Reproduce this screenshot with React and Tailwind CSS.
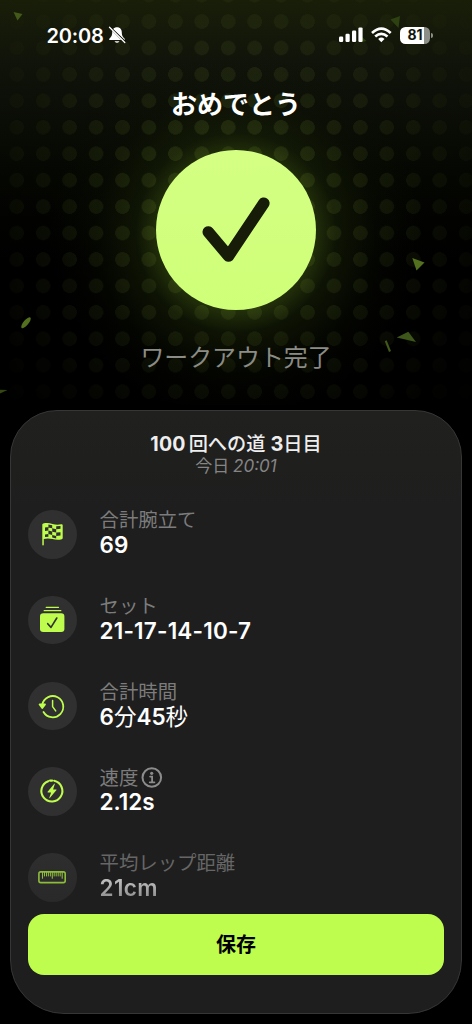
import React from 'react';

const stats = [
  { icon: FlagIcon, label: '合計腕立て', value: [['69']] },
  { icon: StackIcon, label: 'セット', value: [['21-17-14-10-7', 'tracking-[0.200px]']] },
  { icon: HistoryIcon, label: '合計時間', value: [['6'], ['分', 'font-normal'], ['45'], ['秒', 'font-normal']] },
  { icon: BoltIcon, label: '速度', value: [['2.12s']], info: true },
  { icon: RulerIcon, label: '平均レップ距離', value: [['21cm', 'tracking-[0.4px]']], faded: true }
];

function FlagIcon() {
  return (
    <svg width="48" height="48" viewBox="0 0 48 48" fill="none">
      <path d="M14.300 14.600Q14.300 13.800 15.200 13.500C18.200 12.700 21.500 13 24.500 13.900C27.500 14.800 30.500 14.900 33.300 14.200Q34.700 13.900 34.700 15.200V28Q34.700 28.900 33.800 29.200C30.600 30.200 27.500 29.900 24.500 29.100C21.500 28.300 18.700 28.200 15.800 29V34.700Q15.800 35.400 15 35.400T14.300 34.700Z" fill="#befd4d" />
      <g fill="#303030">
        <path d="M17 17.600L20.400 17V20.400L17 20.900ZM20.400 14.600L24.200 15.300V18.200L20.400 17.400ZM24.200 18.300L28.200 19.200V22.600L24.200 21.800ZM28.200 16.200L32.500 15.900V18.800L28.200 19.200Z" />
        <path d="M20.400 20.400L24.200 21.600V25L20.400 24.100ZM17 24.500L20.400 24V26.700L17 27.100ZM24.200 25L28.200 26V28.400L24.200 27.600ZM28.200 22.600L32.500 22.200V25.600L28.200 26Z" />
      </g>
    </svg>
  );
}

function StackIcon() {
  return (
    <svg width="48" height="48" viewBox="0 0 48 48" fill="none" strokeLinecap="round" strokeLinejoin="round">
      <path d="M18.200 11.300H30.500M16.200 14.700H32.800" stroke="#befd4d" strokeWidth="1.300" />
      <rect x="12" y="17.200" width="24.400" height="18.800" rx="3.200" fill="#befd4d" />
      <path d="M19.700 27.700L23 31.400L28.800 22" stroke="#303030" strokeWidth="1.600" />
    </svg>
  );
}

function HistoryIcon() {
  return (
    <svg width="48" height="48" viewBox="0 0 48 48" fill="none" stroke="#befd4d" strokeWidth="1.800" strokeLinecap="round" strokeLinejoin="round">
      <path d="M14.300 22.500A10.600 10.600 0 1 1 15.500 30" />
      <path d="M11.600 22.500H17L14.300 26Z" fill="#befd4d" />
      <path d="M24.600 18.500V24.600L27.700 28.900" strokeWidth="1.500" />
    </svg>
  );
}

function BoltIcon() {
  return (
    <svg width="48" height="48" viewBox="0 0 48 48" fill="none" stroke="#befd4d" strokeWidth="2.100" strokeLinecap="round">
      <path d="M26.200 13.800A10.500 10.500 0 1 1 20.200 14.200M22 13.600H24.200" />
      <path d="M26.300 16.700L19.600 24.700q-.4.700.4.700h3.100l-1.800 5.400q-.1.700.5.200l6.700-7.900q.4-.7-.4-.7h-3l1.700-5.300q.1-.8-.5-.4z" fill="#befd4d" stroke="none" />
    </svg>
  );
}

function RulerIcon() {
  return (
    <svg width="48" height="48" viewBox="0 0 48 48" fill="none" stroke="#8dbb3a" strokeLinecap="round">
      <rect x="10.900" y="18.900" width="26.300" height="10.700" rx="1.800" strokeWidth="1.600" />
      <path d="M14.500 19v6.300M24.300 19v6.300M34.200 19v6.300" strokeWidth="1.100" />
      <path d="M16.500 19v4M18.500 19v4M20.400 19v4M22.400 19v4M26.200 19v4M28.200 19v4M30.200 19v4M32.200 19v4" strokeWidth="1" />
    </svg>
  );
}

function InfoIcon() {
  return (
    <svg width="22" height="22" viewBox="0 0 22 22" fill="none" stroke="#8c8c8c" strokeLinecap="round">
      <circle cx="10.800" cy="10.500" r="9.300" strokeWidth="2" />
      <circle cx="10.700" cy="6.300" r="1.600" fill="#8c8c8c" stroke="none" />
      <path d="M9.100 9.600H11.100V15.200M8.700 15.300H13.400" strokeWidth="1.800" />
    </svg>
  );
}

function StatusBar() {
  return (
    <div className="flex h-[70px] items-center pl-[46.500px] pr-[39px] text-white">
      <span className="mt-[1px] w-[61.500px] text-[20px] font-semibold tracking-[-0.150px] whitespace-nowrap">20:08</span>
      <svg width="18" height="18" viewBox="0 0 18 18">
        <path d="M9 1.200C5.900 1.200 4.200 3.500 4.200 6.200C4.200 10 3 10.900 1.500 12.500Q.6 14 2.200 14H15.800Q17.400 14 16.500 12.500C15 10.900 13.800 10 13.800 6.200C13.800 3.500 12.100 1.200 9 1.200ZM6.500 15.200Q9 18.300 11.500 15.200Z" fill="#fff" />
        <path d="M2.500 2.400L17 17M1.500 .2L17.600 15.700" stroke="#10140a" strokeWidth="1.100" />
        <path d="M1.500 1.300L16.800 16.500" stroke="#fff" strokeWidth="1.300" strokeLinecap="round" />
      </svg>
      <svg className="ml-auto" width="24" height="16" viewBox="0 0 24 16" fill="#fff">
        <rect y="9.500" width="4.200" height="5.500" rx="1.200" />
        <rect x="6.500" y="6.700" width="4.200" height="8.300" rx="1.200" />
        <rect x="13" y="3.500" width="4.200" height="11.500" rx="1.200" />
        <rect x="19.400" y="0.400" width="4.200" height="14.600" rx="1.200" />
      </svg>
      <svg className="ml-2" width="21" height="16" viewBox="0 0 21 16" fill="none" stroke="#fff" strokeWidth="2.700">
        <path d="M1 6Q10.300-2.600 19.700 6" />
        <path d="M4.200 9.500Q10.300 4.200 16.500 9.500" />
        <path d="M7.200 11.900Q10.300 9.300 13.500 11.900L10.300 15.200Z" fill="#fff" stroke="none" />
      </svg>
      <div className="ml-[8px] flex items-center">
        <div className="flex h-[17px] w-[30px] items-center justify-center rounded-[5.500px] bg-[linear-gradient(90deg,#fff_80%,#8c8f87_80%)]">
          <span className="text-[14px] leading-none font-bold text-[#11150a]">81</span>
        </div>
        <div className="ml-[1px] h-[5px] w-[2px] rounded-r-full bg-[#8c8f87]" />
      </div>
    </div>
  );
}

function Confetti() {
  return (
    <svg className="absolute inset-0" width="472" height="410" viewBox="0 0 472 410">
      <path d="M13.500 12L22.500 14L17.500 20.500Z" fill="#42591a" />
      <path d="M390.500 19.500L400 16L398.500 28Z" fill="#2e4211" />
      <path d="M362 37L366.500 41L362 42Z" fill="#2e4211" />
      <path d="M412.300 258L424.500 262.500L416.500 270.500Z" fill="#53701e" />
      <path d="M396.700 337.500L408.300 331.700L416 342Z" fill="#3e561a" />
      <path d="M384.800 341.200L386.600 340.300L391 351L389 352Z" fill="#42591a" />
      <ellipse cx="26" cy="322.700" rx="6.800" ry="2.500" transform="rotate(-50 26 322.700)" fill="#53701e" />
      <path d="M0 389.800L7.500 390L0 393.500Z" fill="#34480f" />
    </svg>
  );
}

function StatRow({ icon: Icon, label, value, info, faded }) {
  return (
    <div className="flex h-[85.750px]">
      <div className={faded ? 'size-[48.500px] rounded-full bg-[linear-gradient(#2e2e2e,#292929)]' : 'size-[48.500px] rounded-full bg-[#303030]'}>
        <Icon />
      </div>
      <div className="ml-[23px] -mt-[2px] whitespace-nowrap">
        <div className={faded ? 'flex h-[26px] items-center text-[19.400px] text-[#666]' : 'flex h-[26px] items-center text-[19.400px] text-[#7c7c7c]'}>
          {label}
          {info && <span className="ml-[3px]"><InfoIcon /></span>}
        </div>
        <div className={faded
          ? '-mt-[3px] h-[28px] bg-[linear-gradient(#bbb_25%,#949494_80%)] bg-clip-text text-[22.500px] leading-[28px] font-semibold text-transparent'
          : '-mt-[3px] h-[28px] text-[22.500px] leading-[28px] font-semibold text-white'}>
          {value.map(([text, cls], i) => <span key={i} className={cls}>{text}</span>)}
        </div>
      </div>
    </div>
  );
}

export default function App() {
  return (
    <div className="relative flex h-[1024px] w-[472px] flex-col overflow-hidden bg-black bg-[linear-gradient(#191e09_0px,#10130a_65px,#050702_170px,#000_260px)] font-['Inter','Noto_Sans_CJK_JP',sans-serif]">
      <div className="absolute inset-x-0 top-0 h-[405px] bg-[radial-gradient(circle_at_236px_233px,#29390c_70px,#1b260880_100px,#0e150440_140px,transparent_185px)]" />
      <div className="absolute inset-x-0 top-0 h-[405px] bg-[radial-gradient(circle,#a8cc451c_7px,transparent_7.500px)] bg-[length:26.450px_26.450px] bg-[position:3.500px_8.300px] mask-[radial-gradient(circle_at_236px_200px,#000_80px,#0009_170px,#0004_240px,transparent_310px)]" />
      <Confetti />

      <header className="relative flex h-[410px] flex-col items-center">
        <div className="w-full"><StatusBar /></div>
        <h1 className="mt-[16px] h-[38px] text-[26px] leading-[38px] font-bold text-white">おめでとう</h1>
        <div className="mt-[26px] size-[160px] shrink-0 rounded-full bg-[linear-gradient(#d4ff83,#cfff78)]">
          <svg width="160" height="160" viewBox="0 0 160 160" fill="none">
            <path d="M52.300 82L72.500 106L107.800 53.200" stroke="#171c09" strokeWidth="11.600" strokeLinecap="round" strokeLinejoin="round" />
          </svg>
        </div>
        <p className="mt-[30px] text-[23.900px] leading-[36px] text-[#8b8c85]">ワークアウト完了</p>
      </header>

      <main className="relative mx-[10px] flex h-[604px] flex-col rounded-t-[47px] rounded-b-[54px] border border-[#363636] bg-[linear-gradient(#20201e,#1e1e1e_100px)] px-[17px]">
        <div className="mt-[20px] text-center text-[19.200px] leading-[26px] text-[#eee]">
          <span className="text-[19.500px] font-bold tracking-[0.2px]">100</span>
          <span className="ml-[3px] font-medium">回への道</span>
          <span className="ml-[5px] text-[20px] font-bold">3</span>
          <span className="font-medium">日目</span>
        </div>
        <div className="-mt-[1px] text-center text-[17px] leading-[20px] text-[#858585]">
          今日 <span className="-ml-[1px] italic">20:01</span>
        </div>
        <div className="mt-[34px] h-[404px]">
          {stats.map(s => <StatRow key={s.label} {...s} />)}
        </div>
        <button className="h-[61px] w-full shrink-0 rounded-[16px] bg-[#befd4d] text-[20px] font-bold text-black">保存</button>
      </main>
    </div>
  );
}
